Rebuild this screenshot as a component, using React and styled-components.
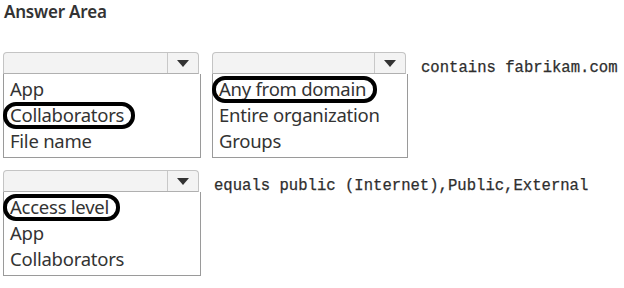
import React from "react";
import styled, { createGlobalStyle } from "styled-components";

const Global = createGlobalStyle`
  html, body {
    margin: 0;
    padding: 0;
    background: #ffffff;
  }
  body {
    font-family: "Noto Sans", "Open Sans", sans-serif;
    color: #333333;
  }
`;

const rows = [
  {
    condition: "contains fabrikam.com",
    boxes: [
      { width: 196, items: ["App", "Collaborators", "File name"], marked: 1 },
      { width: 194, items: ["Any from domain", "Entire organization", "Groups"], marked: 0 },
    ],
  },
  {
    condition: "equals public (Internet),Public,External",
    boxes: [{ width: 196, items: ["Access level", "App", "Collaborators"], marked: 0 }],
  },
];

export default function App() {
  return (
    <Page>
      <Global />
      <Title>Answer Area</Title>
      <Rows>
        {rows.map((row, r) => (
          <Row key={r}>
            {row.boxes.map((box, b) => (
              <Dropdown key={b} $width={box.width}>
                <SelectBar>
                  <Field />
                  <ArrowButton>
                    <svg width="12" height="7" viewBox="0 0 12 7">
                      <path d="M0 0 H12 L6 7 Z" fill="#333" />
                    </svg>
                  </ArrowButton>
                </SelectBar>
                <List>
                  {box.items.map((item, i) => (
                    <Item key={item}>
                      <Label $marked={i === box.marked}>{item}</Label>
                    </Item>
                  ))}
                </List>
              </Dropdown>
            ))}
            <Condition>{row.condition}</Condition>
          </Row>
        ))}
      </Rows>
    </Page>
  );
}

const Page = styled.div`
  width: 624px;
  height: 288px;
  padding: 1px 0 0 3px;
  box-sizing: border-box;
  overflow: hidden;
`;

const Title = styled.div`
  font-size: 17px;
  font-weight: 600;
  color: #333;
  letter-spacing: -0.2px;
  line-height: 22px;
  margin-left: 1px;
`;

const Rows = styled.div`
  display: flex;
  flex-direction: column;
  gap: 12px;
  margin-top: 29px;
`;

const Row = styled.div`
  display: flex;
  align-items: flex-start;
  gap: 13px;
`;

const Dropdown = styled.div`
  width: ${(p) => p.$width}px;
  display: flex;
  flex-direction: column;
`;

const SelectBar = styled.div`
  height: 22px;
  display: flex;
  background: #f3f3f3;
  border: 1px solid #c4c4c4;
  border-bottom-color: #b0b0b0;
  border-radius: 4px 4px 0 0;
  box-sizing: border-box;
`;

const Field = styled.div`
  flex: 1;
`;

const ArrowButton = styled.div`
  width: 30px;
  border-left: 1px solid #c8c8c8;
  display: flex;
  align-items: center;
  justify-content: center;
`;

const List = styled.div`
  height: 84px;
  margin-right: -2px;
  border: 1px solid #9a9a9a;
  border-top: none;
  background: #fff;
  box-sizing: border-box;
  padding: 2px 0 0 6px;
`;

const Item = styled.div`
  font-size: 18.5px;
  line-height: 26px;
  color: #333;
  letter-spacing: -0.25px;
`;

const Label = styled.span`
  position: relative;
  display: inline-block;

  &::after {
    content: "";
    display: ${(p) => (p.$marked ? "block" : "none")};
    position: absolute;
    left: -7px;
    right: -11px;
    top: 0px;
    bottom: -1px;
    border: 4px solid #000;
    border-radius: 13px;
  }
`;

const Condition = styled.span`
  margin-top: 7px;
  margin-left: 2px;
  font-family: "Liberation Mono", "DejaVu Sans Mono", monospace;
  font-size: 15.6px;
  font-weight: 400;
  color: #2e2e2e;
  white-space: nowrap;
  -webkit-text-stroke: 0.25px #2e2e2e;
`;
